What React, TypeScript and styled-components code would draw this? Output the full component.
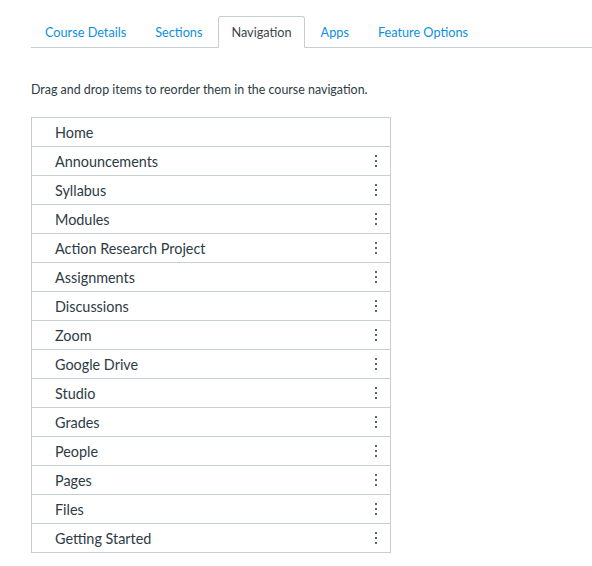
import React from "react";
import styled, { createGlobalStyle } from "styled-components";

const Global = createGlobalStyle`
  html, body { margin: 0; padding: 0; background: #fff; }
  body { font-family: Lato, "Open Sans", sans-serif; color: #2d3b45; }
`;

const Page = styled.div`
  padding: 15px 0 0 31px;
`;

const TabBar = styled.div`
  display: flex;
  align-items: flex-end;
  border-bottom: 1px solid #c7cdd1;
  height: 32px;
`;

const Tab = styled.div<{ $active?: boolean }>`
  font-size: 12.7px;
  line-height: 30px;
  padding: 0 12px;
  margin: 0 2px -1px 1px;
  border: 1px solid ${(p) => (p.$active ? "#c7cdd1" : "transparent")};
  border-bottom: 1px solid ${(p) => (p.$active ? "#fff" : "transparent")};
  border-radius: 3px 3px 0 0;
  background: ${(p) => (p.$active ? "#fff" : "transparent")};
  color: ${(p) => (p.$active ? "#3d454c" : "#0e8ee0")};
  white-space: nowrap;
`;

const Hint = styled.p`
  margin: 34px 0 19px;
  font-size: 12.45px;
  line-height: 16px;
  color: #2d3b45;
`;

const List = styled.ul`
  list-style: none;
  margin: 0;
  padding: 0;
  width: 358px;
  border: 1px solid #c7cdd1;
`;

const Row = styled.li`
  display: flex;
  align-items: center;
  justify-content: space-between;
  height: 28px;
  padding: 0 13px 0 23px;
  font-size: 14.4px;
  color: #2d3b45;
  & + & { border-top: 1px solid #c7cdd1; }
`;

const Kebab = styled.span`
  display: flex;
  flex-direction: column;
  gap: 3px;
  & > i {
    display: block;
    width: 2px;
    height: 2px;
    background: #5a646c;
  }
`;

const items = [
  "Home",
  "Announcements",
  "Syllabus",
  "Modules",
  "Action Research Project",
  "Assignments",
  "Discussions",
  "Zoom",
  "Google Drive",
  "Studio",
  "Grades",
  "People",
  "Pages",
  "Files",
  "Getting Started",
];

const tabs = ["Course Details", "Sections", "Navigation", "Apps", "Feature Options"];

export default function App() {
  return (
    <>
      <Global />
      <Page>
        <TabBar>
          {tabs.map((t) => (
            <Tab key={t} $active={t === "Navigation"}>
              {t}
            </Tab>
          ))}
        </TabBar>
        <Hint>Drag and drop items to reorder them in the course navigation.</Hint>
        <List>
          {items.map((it, i) => (
            <Row key={it}>
              <span>{it}</span>
              {i > 0 && (
                <Kebab>
                  <i />
                  <i />
                  <i />
                </Kebab>
              )}
            </Row>
          ))}
        </List>
      </Page>
    </>
  );
}
